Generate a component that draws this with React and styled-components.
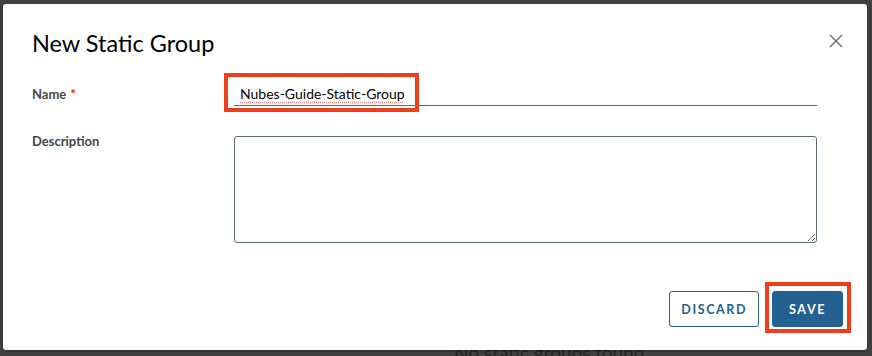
import React from 'react';
import styled, { createGlobalStyle } from 'styled-components';

const GlobalStyle = createGlobalStyle`
  html, body {
    margin: 0;
    padding: 0;
    background: #3f3f3f;
    font-family: Lato, "Open Sans", sans-serif;
  }
`;

const SPage = styled.div`
  position: relative;
  width: 872px;
  height: 356px;
  overflow: hidden;
  background: #404040;
`;

const SEmptyNote = styled.p`
  margin: 0;
  padding-top: 341px;
  padding-left: 454px;
  font-size: 19px;
  color: #262626;
`;

const SModal = styled.div`
  position: absolute;
  top: 4px;
  left: 3px;
  width: 864px;
  height: 346px;
  box-sizing: border-box;
  background: #fff;
  border-radius: 3px;
  box-shadow: 0 1px 3px rgba(0, 0, 0, 0.3);
  padding: 24px 24px 17px 29px;
  display: flex;
  flex-direction: column;
`;

const SHeader = styled.div`
  display: flex;
  align-items: center;
  justify-content: space-between;
`;

const STitle = styled.h2`
  margin: 0;
  font-size: 23.5px;
  line-height: 30px;
  font-weight: 400;
  color: #000;
`;

const SClose = styled.button`
  border: none;
  background: none;
  padding: 0;
  margin-bottom: 4px;
  display: flex;
  cursor: pointer;
`;

const SForm = styled.div`
  display: flex;
  flex-direction: column;
  gap: 26px;
  margin-top: 23px;
  padding-right: 26px;
`;

const SRow = styled.div`
  display: grid;
  grid-template-columns: 202px 1fr;
  align-items: ${({ $top }) => ($top ? 'start' : 'center')};
`;

const SLabel = styled.label`
  font-size: 13px;
  line-height: 18px;
  font-weight: 700;
  color: #454545;
`;

const SRequired = styled.span`
  color: #e12200;
  margin-left: 4px;
`;

const SInputWrap = styled.div`
  position: relative;
  border-bottom: 1px solid #5c6c75;
  height: 24px;
  display: flex;
  align-items: center;
`;

const SInputText = styled.span`
  padding-left: 6px;
  font-size: 14px;
  color: #000;
  text-decoration: underline dotted #f08080;
  text-underline-offset: 3px;
`;

const SMark = styled.span`
  position: absolute;
  left: -10px;
  top: -8px;
  width: 195px;
  height: 39px;
  box-sizing: border-box;
  border: 4px solid #ec401d;
  pointer-events: none;
`;

const STextArea = styled.textarea`
  display: block;
  box-sizing: border-box;
  width: 100%;
  height: 107px;
  margin-top: 4px;
  border: 1px solid #5c6c75;
  border-radius: 3px;
  font-family: inherit;
  resize: vertical;
`;

const SFooter = styled.div`
  margin-top: auto;
  display: flex;
  justify-content: flex-end;
  align-items: flex-end;
  gap: 6px;
`;

const SButton = styled.button`
  box-sizing: border-box;
  height: 36px;
  margin-bottom: ${({ $primary }) => ($primary ? '0' : '6px')};
  padding: 0 ${({ $primary }) => ($primary ? '16px' : '11px')};
  border: 1px solid #236192;
  border-radius: 3px;
  background: ${({ $primary }) => ($primary ? '#236192' : '#fff')};
  color: ${({ $primary }) => ($primary ? '#fff' : '#236192')};
  font-family: inherit;
  font-size: 12.5px;
  font-weight: 700;
  letter-spacing: 1.6px;
  cursor: pointer;
`;

const SButtonMark = styled.span`
  display: flex;
  padding: 5px 4px 2px 3px;
  border: 4px solid #ec401d;
  margin-right: -8px;
`;

function CloseIcon() {
  return (
    <svg width="14" height="14" viewBox="0 0 14 14">
      <path d="M1 1 L13 13 M13 1 L1 13" stroke="#666" strokeWidth="1.3" fill="none" />
    </svg>
  );
}

export default function App() {
  return (
    <>
      <GlobalStyle />
      <SPage>
        <SEmptyNote>No static groups found</SEmptyNote>
        <SModal>
          <SHeader>
            <STitle>New Static Group</STitle>
            <SClose aria-label="Close">
              <CloseIcon />
            </SClose>
          </SHeader>
          <SForm>
            <SRow>
              <SLabel>
                Name<SRequired>*</SRequired>
              </SLabel>
              <SInputWrap>
                <SInputText>Nubes-Guide-Static-Group</SInputText>
                <SMark />
              </SInputWrap>
            </SRow>
            <SRow $top>
              <SLabel>Description</SLabel>
              <STextArea />
            </SRow>
          </SForm>
          <SFooter>
            <SButton>DISCARD</SButton>
            <SButtonMark>
              <SButton $primary>SAVE</SButton>
            </SButtonMark>
          </SFooter>
        </SModal>
      </SPage>
    </>
  );
}
